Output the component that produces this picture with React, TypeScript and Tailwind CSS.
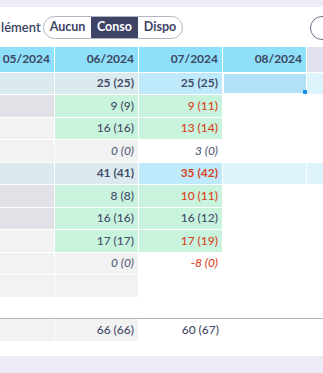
import React from 'react';

type Cell = { v?: string; bg: string; red?: boolean; sel?: boolean };
type Row = { cells: Cell[]; bold?: boolean; italic?: boolean };

const GREY = 'bg-[#e1e2e7]';
const LIGHT = 'bg-[#f2f2f2]';
const GREEN = 'bg-[#c8f3dc]';
const GROUP = 'bg-[#dbeaef]';
const GROUP_HL = 'bg-[#bfeafc]';
const GROUP_SOFT = 'bg-[#ddf4fd]';
const WHITE = 'bg-white';

const ROWS: Row[] = [
  {
    bold: true,
    cells: [
      { bg: GROUP },
      { bg: GROUP, v: '25 (25)' },
      { bg: GROUP_HL, v: '25 (25)' },
      { bg: 'bg-[#b2e0f8]', sel: true },
      { bg: GROUP_SOFT },
    ],
  },
  { cells: [{ bg: GREY }, { bg: GREEN, v: '9 (9)' }, { bg: GREEN, v: '9 (11)', red: true }, { bg: WHITE }, { bg: WHITE }] },
  { cells: [{ bg: LIGHT }, { bg: GREEN, v: '16 (16)' }, { bg: GREEN, v: '13 (14)', red: true }, { bg: WHITE }, { bg: WHITE }] },
  { italic: true, cells: [{ bg: LIGHT }, { bg: LIGHT, v: '0 (0)' }, { bg: WHITE, v: '3 (0)' }, { bg: WHITE }, { bg: WHITE }] },
  {
    bold: true,
    cells: [{ bg: GROUP }, { bg: GROUP, v: '41 (41)' }, { bg: GROUP_HL, v: '35 (42)', red: true }, { bg: GROUP_SOFT }, { bg: GROUP_SOFT }],
  },
  { cells: [{ bg: GREY }, { bg: GREEN, v: '8 (8)' }, { bg: GREEN, v: '10 (11)', red: true }, { bg: WHITE }, { bg: WHITE }] },
  { cells: [{ bg: GREY }, { bg: GREEN, v: '16 (16)' }, { bg: GREEN, v: '16 (12)' }, { bg: WHITE }, { bg: WHITE }] },
  { cells: [{ bg: LIGHT }, { bg: GREEN, v: '17 (17)' }, { bg: GREEN, v: '17 (19)', red: true }, { bg: WHITE }, { bg: WHITE }] },
  { italic: true, cells: [{ bg: LIGHT }, { bg: LIGHT, v: '0 (0)' }, { bg: WHITE, v: '-8 (0)', red: true }, { bg: WHITE }, { bg: WHITE }] },
  { cells: [{ bg: LIGHT }, { bg: LIGHT }, { bg: WHITE }, { bg: WHITE }, { bg: WHITE }] },
];

const MONTHS = ['05/2024', '06/2024', '07/2024', '08/2024'];

const TableRow: React.FC<{ row: Row }> = ({ row }) => (
  <div className="flex h-[22.5px] border-b border-white">
    {row.cells.map((c, i) => (
      <div
        key={i}
        className={`relative flex items-center justify-end pr-[4px] ${c.bg} ${
          i < 4 ? 'w-[84px] shrink-0 border-r border-white' : 'flex-1'
        } ${c.sel ? 'border border-[#1a8fe3]' : ''} ${c.red ? 'text-[#d9441c]' : row.italic ? 'text-[#555c78]' : 'text-[#454d6b]'} ${
          row.bold ? 'font-bold' : 'font-medium'
        } ${row.italic ? 'italic' : ''}`}
      >
        {c.v}
        {c.sel && <span className="absolute -bottom-px -right-px w-[4px] h-[4px] bg-[#1a8fe3]" />}
      </div>
    ))}
  </div>
);

export default function App() {
  return (
    <div
      className="w-[323px] h-[373px] bg-[#ececf6] pt-[7px] overflow-hidden text-[12px]"
      style={{ fontFamily: 'Lato, "Noto Sans", sans-serif' }}
    >
      <div className="bg-white h-[349px] overflow-hidden">
        {/* toolbar */}
        <div className="flex items-center h-[40px] pt-[1px] whitespace-nowrap overflow-hidden">
          <span className="w-[43px] shrink-0 pl-[1px] text-[13px] font-semibold text-[#3d4466]">lément</span>
          <div className="flex shrink-0 h-[23px] border border-[#b4b4c4] rounded-full overflow-hidden text-[12.5px] font-bold text-[#3d4466]">
            <span className="flex items-center w-[47px] justify-center">Aucun</span>
            <span className="flex items-center w-[47px] justify-center bg-[#3d4466] text-white">Conso</span>
            <span className="flex items-center w-[44px] justify-center">Dispo</span>
          </div>
          <div className="ml-[127px] shrink-0 w-[40px] h-[24px] rounded-full border border-[#6c6f88]" />
        </div>

        {/* table */}
        <div className="overflow-hidden">
          <div className="-ml-[29px] w-[370px]">
            <div className="flex h-[25.5px] border-b border-white font-bold text-[#3c4760]">
              {MONTHS.map((m) => (
                <div
                  key={m}
                  className="w-[84px] shrink-0 border-r border-white bg-[#8fe0fb] flex items-center justify-end pr-[4px]"
                >
                  {m}
                </div>
              ))}
              <div className="flex-1 bg-[#e2e2ef]" />
            </div>
            {ROWS.map((r, i) => (
              <TableRow key={i} row={r} />
            ))}
            <div className="h-[20px]" />
            <div className="flex h-[23px] border-t border-[#b4b4c4] text-[#454d6b] font-medium">
              <div className="w-[84px] shrink-0 bg-[#f2f2f2] border-r border-white" />
              <div className="w-[84px] shrink-0 bg-[#f2f2f2] border-r border-white flex items-center justify-end pr-[4px]">
                66 (66)
              </div>
              <div className="w-[84px] shrink-0 flex items-center justify-end pr-[4px]">60 (67)</div>
              <div className="flex-1" />
            </div>
          </div>
        </div>
      </div>
    </div>
  );
}
